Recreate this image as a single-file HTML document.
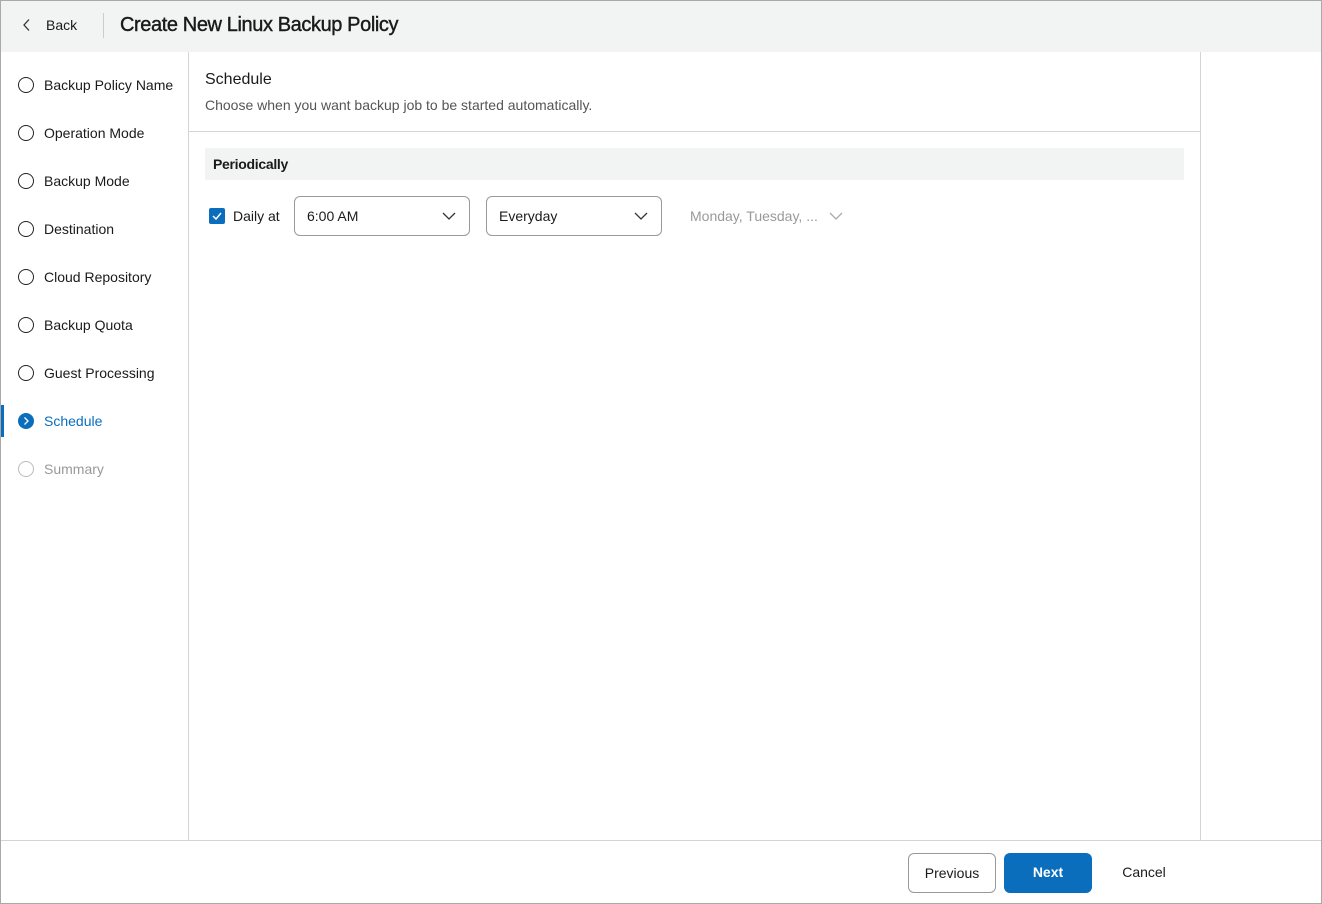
<!DOCTYPE html>
<html><head><style>
*{box-sizing:border-box;margin:0;padding:0}
body{width:1322px;height:904px;font-family:"Liberation Sans",sans-serif;color:#1a1a1a;background:#fff;position:relative;overflow:hidden}
.frame{position:absolute;left:0;top:0;width:1322px;height:904px;border:1px solid #a9a9a9;pointer-events:none}
.hdr{position:absolute;left:0;top:0;width:1322px;height:52px;background:#f2f3f3}
.abs{position:absolute;white-space:nowrap}
.side{position:absolute;left:188px;top:52px;width:1px;height:788px;background:#d4d4d4}
.rside{position:absolute;left:1200px;top:52px;width:1px;height:788px;background:#d4d4d4}
.foot{position:absolute;left:0;top:840px;width:1322px;height:1px;background:#d4d4d4}
.step{position:absolute;left:18px;font-size:14px;height:20px;line-height:16px;display:flex;align-items:center}
.circ{width:16px;height:16px;border:1.5px solid #222;border-radius:50%;margin-right:10px}
.sel{position:absolute;left:294px;top:196px;width:176px;height:40px;border:1px solid #9a9a9a;border-radius:6px;font-size:14px;padding-left:12px;line-height:38px}
.sel svg{position:absolute;right:13px;top:14px}
.btn{position:absolute;top:853px;height:40px;border-radius:6px;font-size:14px;text-align:center;line-height:38px}
</style></head><body>
<div class="hdr"></div>
<svg class="abs" style="left:22px;top:18px" width="10" height="14"><path d="M7 1.5L2 7l5 5.5" fill="none" stroke="#333" stroke-width="1.3"/></svg>
<div class="abs" style="left:46px;top:17px;font-size:14px">Back</div>
<div class="abs" style="left:103px;top:13px;width:1px;height:25px;background:#ccc"></div>
<div class="abs" style="left:120px;top:14px;font-size:20px;letter-spacing:-0.4px;-webkit-text-stroke:0.4px #1a1a1a">Create New Linux Backup Policy</div>
<div class="side"></div><div class="rside"></div><div class="foot"></div>
<div class="step" style="top:75px"><div class="circ"></div>Backup Policy Name</div>
<div class="step" style="top:123px"><div class="circ"></div>Operation Mode</div>
<div class="step" style="top:171px"><div class="circ"></div>Backup Mode</div>
<div class="step" style="top:219px"><div class="circ"></div>Destination</div>
<div class="step" style="top:267px"><div class="circ"></div>Cloud Repository</div>
<div class="step" style="top:315px"><div class="circ"></div>Backup Quota</div>
<div class="step" style="top:363px"><div class="circ"></div>Guest Processing</div>
<div class="abs" style="left:1px;top:405px;width:3px;height:32px;background:#0a6ebd"></div>
<div class="step" style="top:411px;color:#0a6ebd"><div class="circ" style="border-color:#0a6ebd;background:#0a6ebd;position:relative"><svg style="position:absolute;left:3px;top:2px" width="8" height="10"><path d="M2.5 1.5L6 5 2.5 8.5" fill="none" stroke="#fff" stroke-width="1.3"/></svg></div>Schedule</div>
<div class="step" style="top:459px;color:#999"><div class="circ" style="border-color:#bbb"></div>Summary</div>
<div class="abs" style="left:205px;top:71px;font-size:16px">Schedule</div>
<div class="abs" style="left:205px;top:97px;font-size:14px;color:#555">Choose when you want backup job to be started automatically.</div>
<div class="abs" style="left:189px;top:131px;width:1011px;height:1px;background:#d4d4d4"></div>
<div class="abs" style="left:205px;top:148px;width:979px;height:32px;background:#f2f3f3"></div>
<div class="abs" style="left:213px;top:156px;font-size:14px;font-weight:bold;letter-spacing:-0.3px">Periodically</div>
<div class="abs" style="left:209px;top:208px;width:16px;height:16px;background:#0a6ebd;border-radius:2px"><svg width="16" height="16"><path d="M4 8l3 3 5-6" fill="none" stroke="#fff" stroke-width="1.5"/></svg></div>
<div class="abs" style="left:233px;top:208px;font-size:14px">Daily at</div>
<div class="sel">6:00 AM<svg width="14" height="10"><path d="M1 2l6 6 6-6" fill="none" stroke="#333" stroke-width="1.3"/></svg></div>
<div class="sel" style="left:486px">Everyday<svg width="14" height="10"><path d="M1 2l6 6 6-6" fill="none" stroke="#333" stroke-width="1.3"/></svg></div>
<div class="abs" style="left:690px;top:208px;font-size:14px;color:#999">Monday, Tuesday, ...</div>
<svg class="abs" style="left:829px;top:211px" width="14" height="10"><path d="M1 2l6 6 6-6" fill="none" stroke="#aaa" stroke-width="1.3"/></svg>
<div class="btn" style="left:908px;width:88px;border:1px solid #999">Previous</div>
<div class="btn" style="left:1004px;width:88px;background:#0a6ebd;color:#fff;font-weight:bold">Next</div>
<div class="btn" style="left:1100px;width:88px">Cancel</div>
<div class="frame"></div>
</body></html>
